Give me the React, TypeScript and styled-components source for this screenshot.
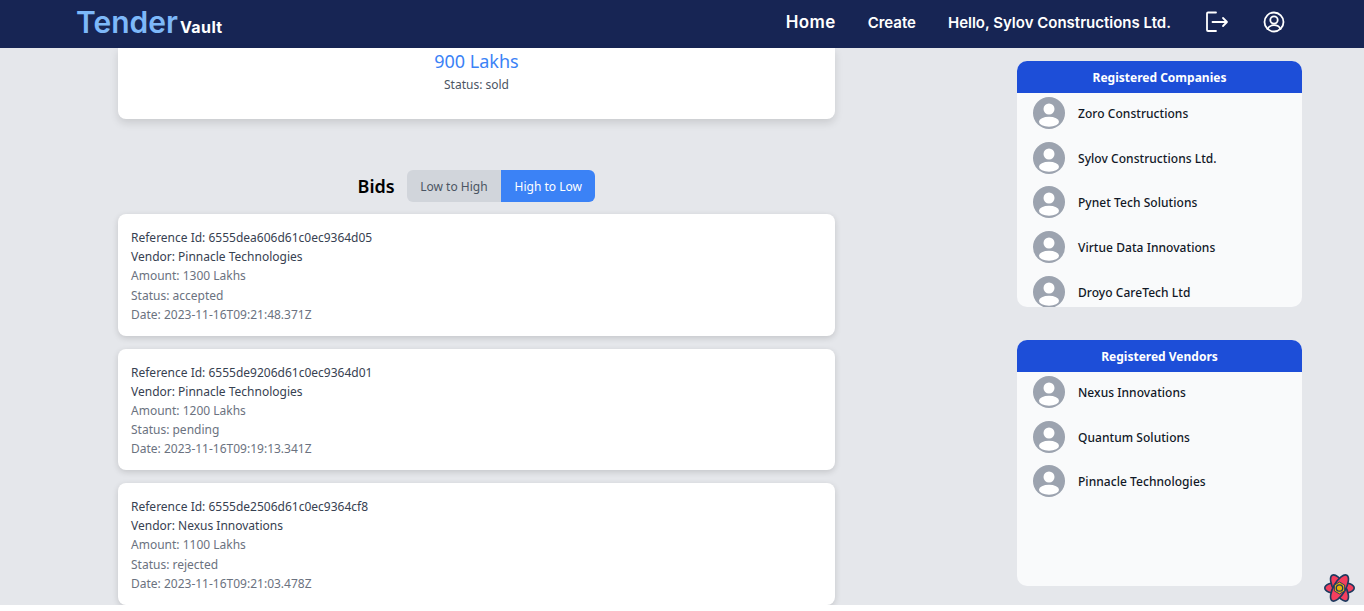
import styled, { createGlobalStyle } from 'styled-components'

const GlobalStyle = createGlobalStyle`
  html, body {
    margin: 0;
    padding: 0;
    height: 611px;
    overflow: hidden;
    background: #fff;
    font-family: "Noto Sans", "Open Sans", sans-serif;
  }
`

const bids = [
  { ref: '6555dea606d61c0ec9364d05', vendor: 'Pinnacle Technologies', amount: 1300, status: 'accepted', date: '2023-11-16T09:21:48.371Z' },
  { ref: '6555de9206d61c0ec9364d01', vendor: 'Pinnacle Technologies', amount: 1200, status: 'pending', date: '2023-11-16T09:19:13.341Z' },
  { ref: '6555de2506d61c0ec9364cf8', vendor: 'Nexus Innovations', amount: 1100, status: 'rejected', date: '2023-11-16T09:21:03.478Z' },
]

const companies = ['Zoro Constructions', 'Sylov Constructions Ltd.', 'Pynet Tech Solutions', 'Virtue Data Innovations', 'Droyo CareTech Ltd']
const vendors = ['Nexus Innovations', 'Quantum Solutions', 'Pinnacle Technologies']

function Avatar() {
  return (
    <AvatarIcon viewBox="0 0 32 32">
      <circle cx="16" cy="16" r="16" fill="#9ca3af" />
      <circle cx="16" cy="12" r="5.5" fill="#fff" />
      <ellipse cx="16" cy="24.700" rx="10" ry="5" fill="#fff" />
    </AvatarIcon>
  )
}

function PeopleList({ title, names }: { title: string; names: string[] }) {
  return (
    <>
      <PanelHeader>{title}</PanelHeader>
      <People>
        {names.map(name => (
          <Person key={name}>
            <Avatar />
            <PersonName>{name}</PersonName>
          </Person>
        ))}
      </People>
    </>
  )
}

function App() {
  return (
    <>
      <GlobalStyle />
      <Page>
        <Navbar>
          <Logo>Tender<LogoSmall>Vault</LogoSmall></Logo>
          <NavLinks>
            <HomeLink>Home</HomeLink>
            <NavLink>Create</NavLink>
            <NavLink>Hello, Sylov Constructions Ltd.</NavLink>
            <NavIcon viewBox="0 0 24 24">
              <path d="M11 2.500H3a1 1 0 0 0-1 1v16.500a1 1 0 0 0 1 1h8" />
              <path d="M7.500 12H22M18 8l4 4-4 4" />
            </NavIcon>
            <NavIcon viewBox="0 0 24 24">
              <circle cx="12" cy="12" r="9.500" />
              <circle cx="12" cy="10" r="3.700" />
              <path d="M5.500 19c1.200-2.500 3.500-3.800 6.500-3.800s5.300 1.300 6.500 3.800" />
            </NavIcon>
          </NavLinks>
        </Navbar>
        <Content>
          <MainColumn>
            <TenderCard>
              <Price>900 Lakhs</Price>
              <TenderStatus>Status: sold</TenderStatus>
            </TenderCard>
            <BidsHeader>
              <BidsTitle>Bids</BidsTitle>
              <SortGroup>
                <SortButton>Low to High</SortButton>
                <SortButton $active>High to Low</SortButton>
              </SortGroup>
            </BidsHeader>
            <BidList>
              {bids.map(bid => (
                <BidCard key={bid.ref}>
                  <BidLine>Reference Id: {bid.ref}</BidLine>
                  <BidLine>Vendor: {bid.vendor}</BidLine>
                  <BidLine $muted>Amount: {bid.amount} Lakhs</BidLine>
                  <BidLine $muted>Status: {bid.status}</BidLine>
                  <BidLine $muted>Date: {bid.date}</BidLine>
                </BidCard>
              ))}
            </BidList>
          </MainColumn>
          <SideColumn>
            <Panel $height={246}>
              <PeopleList title="Registered Companies" names={companies} />
            </Panel>
            <Panel $height={246}>
              <PeopleList title="Registered Vendors" names={vendors} />
            </Panel>
          </SideColumn>
        </Content>
        <DevBadge viewBox="0 0 36 32">
          <g fill="#f43f5e" stroke="#1e3a5f" strokeWidth="1.800">
            <ellipse cx="18" cy="16" rx="16" ry="6.500" />
            <ellipse cx="18" cy="16" rx="16" ry="6.500" transform="rotate(60 18 16)" />
            <ellipse cx="18" cy="16" rx="16" ry="6.500" transform="rotate(120 18 16)" />
          </g>
          <polygon points="18,9.500 23.600,12.750 23.600,19.250 18,22.500 12.400,19.250 12.400,12.750" fill="#eab308" stroke="#1e3a5f" strokeWidth="1" />
          <circle cx="18" cy="16" r="3.500" fill="none" stroke="#1e3a5f" strokeWidth="1.400" />
        </DevBadge>
      </Page>
    </>
  )
}

const Page = styled.div`
  position: relative;
  height: 605px;
  overflow: hidden;
  background: #e5e7eb;
`
const Navbar = styled.header`
  box-sizing: border-box;
  height: 48px;
  background: #172554;
  display: flex;
  align-items: center;
  justify-content: space-between;
  padding: 0 78px 4px 76px;
`
const Logo = styled.div`
  font-family: Inter, "Noto Sans", sans-serif;
  font-size: 30px;
  font-weight: 600;
  color: #7db8f9;
  display: flex;
  align-items: baseline;
`
const LogoSmall = styled.span`
  margin-left: 2px;
  font-size: 16px;
  font-weight: 700;
  letter-spacing: 0.4px;
  color: #fff;
`
const NavLinks = styled.nav`
  display: flex;
  align-items: center;
`
const NavLink = styled.span`
  font-family: Inter, "Noto Sans", sans-serif;
  font-size: 15px;
  font-weight: 600;
  color: #fff;
  margin-right: 32px;
`
const HomeLink = styled(NavLink)`
  font-size: 17px;
  letter-spacing: 0.4px;
`
const NavIcon = styled.svg`
  width: 24px;
  height: 24px;
  margin-left: 2px;
  margin-right: 31px;
  fill: none;
  stroke: #fff;
  stroke-width: 1.800;
  stroke-linecap: round;
  stroke-linejoin: round;
  &:last-child {
    margin-right: 0;
  }
`
const Content = styled.main`
  display: flex;
  align-items: flex-start;
  padding-left: 118px;
`
const MainColumn = styled.section`
  width: 717px;
`
const TenderCard = styled.div`
  height: 71px;
  background: #fff;
  border-radius: 0 0 8px 8px;
  box-shadow: 0 4px 8px rgba(0, 0, 0, 0.12);
  display: flex;
  flex-direction: column;
  align-items: center;
`
const Price = styled.div`
  margin-top: -1px;
  font-size: 18px;
  line-height: 28px;
  color: #3b82f6;
`
const TenderStatus = styled.div`
  font-size: 12px;
  line-height: 20px;
  color: #4b5563;
`
const BidsHeader = styled.div`
  margin-top: 51px;
  display: flex;
  align-items: center;
  justify-content: center;
  gap: 12px;
`
const BidsTitle = styled.h2`
  margin: 0;
  font-size: 18px;
  font-weight: 600;
  color: #000;
`
const SortGroup = styled.div`
  display: flex;
  height: 32px;
  border-radius: 6px;
  overflow: hidden;
`
const SortButton = styled.button<{ $active?: boolean }>`
  border: 0;
  padding: 0 13.500px;
  font-family: inherit;
  font-size: 12px;
  background: ${p => (p.$active ? '#3b82f6' : '#d1d5db')};
  color: ${p => (p.$active ? '#fff' : '#4b5563')};
`
const BidList = styled.div`
  margin-top: 12px;
  display: flex;
  flex-direction: column;
  gap: 13px;
`
const BidCard = styled.article`
  background: #fff;
  border-radius: 8px;
  box-shadow: 0 2px 6px rgba(0, 0, 0, 0.15);
  padding: 14px 13px 11.500px;
`
const BidLine = styled.div<{ $muted?: boolean }>`
  font-size: 12px;
  line-height: 19.200px;
  color: ${p => (p.$muted ? '#6b7280' : '#374151')};
`
const SideColumn = styled.aside`
  margin-left: 182px;
  padding-top: 13px;
  width: 285px;
  display: flex;
  flex-direction: column;
  gap: 33px;
`
const Panel = styled.div<{ $height: number }>`
  height: ${p => p.$height}px;
  background: #f9fafb;
  border-radius: 10px;
  overflow: hidden;
`
const PanelHeader = styled.div`
  height: 32px;
  background: #1d4ed8;
  color: #fff;
  font-size: 12px;
  font-weight: 700;
  display: flex;
  align-items: center;
  justify-content: center;
`
const People = styled.div`
  padding-top: 4px;
`
const Person = styled.div`
  height: 32px;
  margin-bottom: 12.700px;
  padding-left: 16px;
  display: flex;
  align-items: center;
  gap: 13px;
`
const AvatarIcon = styled.svg`
  width: 32px;
  height: 32px;
  flex-shrink: 0;
`
const PersonName = styled.span`
  padding-top: 1px;
  font-size: 12px;
  font-weight: 500;
  letter-spacing: 0.05px;
  color: #111827;
`
const DevBadge = styled.svg`
  position: absolute;
  right: 8px;
  bottom: 2px;
  width: 33px;
  height: 30px;
`

export default App
